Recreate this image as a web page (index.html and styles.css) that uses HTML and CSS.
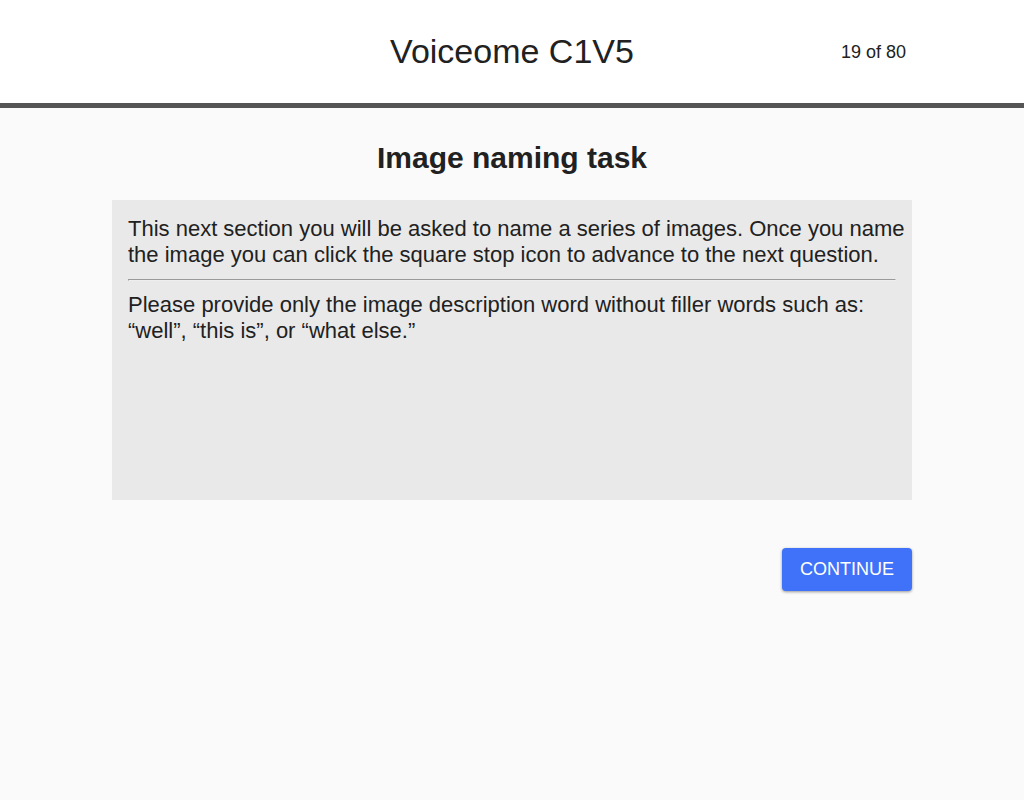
FILE: index.html
```html
<!DOCTYPE html>
<html lang="en">
<head>
<meta charset="utf-8">
<meta name="viewport" content="width=device-width, initial-scale=1">
<title>Voiceome C1V5</title>
<link rel="stylesheet" href="styles.css">
</head>
<body>
<header class="header">
  <div class="container header-inner">
    <h1 class="title">Voiceome C1V5</h1>
    <span class="progress">19 of 80</span>
  </div>
</header>
<main class="container main">
  <h2 class="task-title">Image naming task</h2>
  <section class="panel">
    <p class="text">This next section you will be asked to name a series of images. Once you name the image you can click the square stop icon to advance to the next question.</p>
    <hr class="divider">
    <p class="text">Please provide only the image description word without filler words such as: “well”, “this is”, or “what else.”</p>
  </section>
  <div class="actions">
    <button class="continue" type="button">CONTINUE</button>
  </div>
</main>
</body>
</html>
```
FILE: styles.css
```css
* {
  box-sizing: border-box;
}

body {
  margin: 0;
  min-height: 100vh;
  background: #fafafa;
  color: #212121;
  font-family: Helvetica, "Liberation Sans", Arial, sans-serif;
}

.container {
  width: 100%;
  max-width: 800px;
  margin: 0 auto;
}

.header {
  background: #fff;
  border-bottom: 5px solid #555;
}

.header-inner {
  display: grid;
  grid-template-columns: 1fr auto 1fr;
  align-items: center;
  padding: 31px 6px;
}

.title {
  grid-column: 2;
  margin: 0;
  font-size: 34px;
  font-weight: 400;
  line-height: 41px;
}

.progress {
  justify-self: end;
  font-size: 18px;
  line-height: 24px;
}

.main {
  padding-top: 32px;
}

.task-title {
  margin: 0 0 24px;
  font-size: 30px;
  line-height: 36px;
  text-align: center;
}

.panel {
  min-height: 300px;
  padding: 16px 0 16px 16px;
  background: #e9e9e9;
}

.text {
  margin: 0;
  font-size: 22px;
  line-height: 26px;
}

.divider {
  margin: 11px 16px 11px 0;
  border: 1px solid;
  border-color: #9a9a9a #eee #eee #9a9a9a;
}

.actions {
  display: flex;
  justify-content: flex-end;
  margin-top: 48px;
}

.continue {
  padding: 8px 18px;
  border: 0;
  border-radius: 4px;
  background: #3f72f8;
  box-shadow: 0 1px 3px rgba(0, 0, 0, 0.4);
  color: #fff;
  font-family: inherit;
  font-size: 18px;
  line-height: 27px;
}
```
